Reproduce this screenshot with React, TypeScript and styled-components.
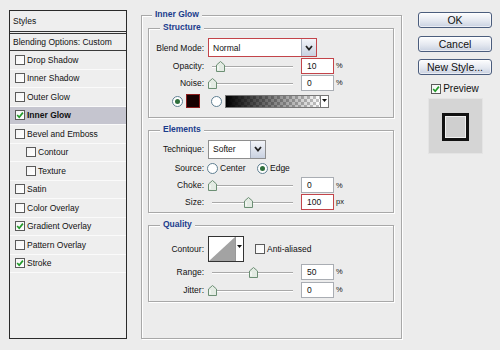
import React from "react";
import styled, { createGlobalStyle } from "styled-components";

const GlobalStyle = createGlobalStyle`
  html, body { margin: 0; padding: 0; background: #ececec; }
  body {
    font-family: "Liberation Sans", Arial, sans-serif;
    font-size: 8.5px;
    color: #111;
  }
`;

const Dialog = styled.div`
  width: 500px;
  height: 350px;
  box-sizing: border-box;
  padding: 10px 0 0 9px;
  display: flex;
  align-items: flex-start;
  background: #ececec;
  overflow: hidden;
`;

/* ---------- left styles list ---------- */

const StylesPanel = styled.div`
  width: 118px;
  height: 329px;
  box-sizing: border-box;
  border: 1px solid #2a2a2a;
  background: #eeeeee;
  display: flex;
  flex-direction: column;
`;

const PanelHeader = styled.div`
  height: 20px;
  display: flex;
  align-items: center;
  padding-left: 3px;
  border-bottom: 3px double #333;
`;

const BlendRow = styled.div`
  height: 17px;
  box-sizing: border-box;
  display: flex;
  align-items: center;
  padding-left: 3px;
  border-bottom: 1px solid #3a3a3a;
`;

const StyleRow = styled.div<{ $selected?: boolean; $indent?: boolean }>`
  height: 18.5px;
  box-sizing: border-box;
  display: flex;
  align-items: center;
  gap: 2px;
  padding-left: ${(p) => (p.$indent ? 16 : 5)}px;
  border-bottom: 1px solid #fafafa;
  background: ${(p) => (p.$selected ? "#c5c5cf" : "transparent")};
  font-weight: ${(p) => (p.$selected ? "bold" : "normal")};
`;

const Box = styled.span`
  width: 10px;
  height: 10px;
  box-sizing: border-box;
  border: 1px solid #5a5a5a;
  background: linear-gradient(135deg, #f4f4f4, #ffffff);
  display: inline-flex;
  align-items: center;
  justify-content: center;
  flex: none;
`;

function CheckBox({ checked }: { checked?: boolean }) {
  return (
    <Box>
      {checked && (
        <svg width="8" height="8" viewBox="0 0 8 8">
          <path d="M1.2 4 L3.2 6.2 L6.9 1.6" fill="none" stroke="#229a2a" strokeWidth="1.7" />
        </svg>
      )}
    </Box>
  );
}

/* ---------- group boxes ---------- */

const OuterGroup = styled.div`
  position: relative;
  margin: 5px 0 0 14px;
  width: 261px;
  height: 324px;
  box-sizing: border-box;
  border: 1px solid #a8a8a8;
  box-shadow: inset 1px 1px 0 #fff, 1px 1px 0 #fff;
  padding: 12px 7px 0 6px;
  flex: none;
`;

const Legend = styled.span<{ $left: number }>`
  position: absolute;
  top: -7px;
  left: ${(p) => p.$left}px;
  padding: 0 3px;
  background: #ececec;
  font-weight: bold;
  color: #1b3c8c;
  line-height: 11px;
`;

const Section = styled.div<{ $h: number; $pt: number }>`
  position: relative;
  height: ${(p) => p.$h}px;
  box-sizing: border-box;
  border: 1px solid #a8a8a8;
  box-shadow: inset 1px 1px 0 #fff, 1px 1px 0 #fff;
  padding-top: ${(p) => p.$pt}px;
  & + & {
    margin-top: 12px;
  }
`;

const FieldRow = styled.div<{ $h: number }>`
  height: ${(p) => p.$h}px;
  display: grid;
  grid-template-columns: 59px 1fr;
  align-items: center;
`;

const Label = styled.span`
  text-align: right;
  padding-right: 4px;
`;

const Control = styled.div`
  display: flex;
  align-items: center;
`;

const Select = styled.div<{ $w: number; $alert?: boolean }>`
  width: ${(p) => p.$w}px;
  height: 19px;
  box-sizing: border-box;
  border: 1px solid ${(p) => (p.$alert ? "#c3444a" : "#8e8e8e")};
  background: #fff;
  display: flex;
  align-items: stretch;
`;

const SelectText = styled.span`
  flex: 1;
  display: flex;
  align-items: center;
  padding-left: 4px;
`;

const SelectButton = styled.span`
  width: 14px;
  border-left: 1px solid #a4acbb;
  background: linear-gradient(#f2f4f9, #c9d1e0);
  display: flex;
  align-items: center;
  justify-content: center;
`;

function Chevron() {
  return (
    <svg width="8" height="6" viewBox="0 0 8 6">
      <path d="M1 1 L4 4.5 L7 1" fill="none" stroke="#222" strokeWidth="1.8" />
    </svg>
  );
}

const Slider = styled.div`
  position: relative;
  width: 89px;
  height: 12px;
  &::before {
    content: "";
    position: absolute;
    left: 4px;
    right: 4px;
    top: 6px;
    height: 1px;
    background: #a9a9a9;
    box-shadow: 0 1px 0 #fff;
  }
`;

const Thumb = styled.svg`
  position: absolute;
  top: 1px;
  margin-left: -4px;
`;

function SliderTrack({ at }: { at: number }) {
  return (
    <Slider>
      <Thumb width="9" height="11" viewBox="0 0 9 11" style={{ left: 4 + at * 81 }}>
        <path d="M0.5 4 L4.5 0.5 L8.5 4 L8.5 10.5 L0.5 10.5 Z" fill="#e3ebe3" stroke="#6c8f74" />
        <path d="M2 5 L2 9" stroke="#fff" />
      </Thumb>
    </Slider>
  );
}

const NumberBox = styled.div<{ $alert?: boolean }>`
  width: 33px;
  height: 16px;
  box-sizing: border-box;
  margin-left: 4px;
  border: 1px solid ${(p) => (p.$alert ? "#c3444a" : "#a9adb3")};
  background: #fff;
  display: flex;
  align-items: center;
  padding-left: 5px;
`;

const Unit = styled.span`
  margin-left: 2px;
  font-size: 7.5px;
`;

function SliderField({
  label,
  value,
  at,
  unit,
  alert,
  h,
}: {
  label: string;
  value: string;
  at: number;
  unit: string;
  alert?: boolean;
  h: number;
}) {
  return (
    <FieldRow $h={h}>
      <Label>{label}</Label>
      <Control>
        <SliderTrack at={at} />
        <NumberBox $alert={alert}>{value}</NumberBox>
        <Unit>{unit}</Unit>
      </Control>
    </FieldRow>
  );
}

const RadioDot = styled.span<{ $checked?: boolean }>`
  width: 11px;
  height: 11px;
  box-sizing: border-box;
  border-radius: 50%;
  border: 1px solid #5f7f92;
  background: #fff;
  display: inline-flex;
  align-items: center;
  justify-content: center;
  flex: none;
  &::after {
    content: "";
    width: 5px;
    height: 5px;
    border-radius: 50%;
    background: ${(p) => (p.$checked ? "#2f6f3c" : "transparent")};
  }
`;

const ColorRow = styled.div`
  height: 20px;
  display: flex;
  align-items: center;
  padding-left: 23px;
`;

const Swatch = styled.span`
  width: 14px;
  height: 14px;
  box-sizing: border-box;
  margin: 0 11px 0 3px;
  border: 1px solid #8b1d1d;
  background: #160000;
`;

const GradientBar = styled.span`
  width: 104px;
  height: 13px;
  box-sizing: border-box;
  margin-left: 3px;
  border: 1px solid #777;
  display: flex;
`;

const GradientFill = styled.span`
  flex: 1;
  background: linear-gradient(to right, #000, rgba(0, 0, 0, 0)),
    repeating-conic-gradient(#c4c4c4 0% 25%, #fff 0% 50%) 0 0 / 6px 6px;
`;

const ArrowCell = styled.span`
  width: 8px;
  border-left: 1px solid #777;
  background: #fff;
  display: flex;
  justify-content: center;
  padding-top: 3px;
  box-sizing: border-box;
`;

function DownArrow() {
  return (
    <svg width="5" height="3" viewBox="0 0 5 3">
      <path d="M0 0 L5 0 L2.5 3 Z" fill="#111" />
    </svg>
  );
}

const RadioOption = styled.span<{ $w: number }>`
  width: ${(p) => p.$w}px;
  display: flex;
  align-items: center;
  gap: 2px;
`;

const ContourBox = styled.div`
  width: 36px;
  height: 26px;
  box-sizing: border-box;
  border: 1px solid #333;
  background: #fff;
  display: flex;
`;

const ContourArrow = styled.span`
  width: 8px;
  border-left: 1px solid #999;
  display: flex;
  justify-content: center;
  padding-top: 8px;
  box-sizing: border-box;
`;

const InlineCheck = styled.span`
  margin-left: 11px;
  display: flex;
  align-items: center;
  gap: 2px;
`;

/* ---------- right column ---------- */

const SideColumn = styled.div`
  margin: 2px 0 0 16px;
  width: 74px;
  display: flex;
  flex-direction: column;
  align-items: center;
  flex: none;
`;

const Button = styled.div`
  width: 74px;
  height: 16px;
  box-sizing: border-box;
  border: 1px solid #4b5d7d;
  border-radius: 3px;
  background: linear-gradient(#fdfdfe, #e4e8f0 55%, #c9d1e1);
  box-shadow: inset 0 0 0 1px rgba(255, 255, 255, 0.6);
  display: flex;
  align-items: center;
  justify-content: center;
  font-size: 10.5px;
  color: #111;
  & + & {
    margin-top: 7.5px;
  }
`;

const PreviewRow = styled.div`
  margin-top: 8px;
  height: 11px;
  display: flex;
  align-items: center;
  gap: 2px;
  font-size: 10px;
`;

const PreviewBox = styled.div`
  margin-top: 4px;
  width: 55px;
  height: 56px;
  box-sizing: border-box;
  border: 1px solid #e4e4e4;
  background: #d5d5d5;
  display: flex;
  align-items: center;
  justify-content: center;
`;

const PreviewSquare = styled.div`
  width: 27px;
  height: 28px;
  box-sizing: border-box;
  border: 3px solid #111;
  background: #cfcfcf;
  box-shadow: inset 0 0 0 1px #efefef;
  margin-top: 2px;
`;

const styleItems: { name: string; checked?: boolean; selected?: boolean; indent?: boolean }[] = [
  { name: "Drop Shadow" },
  { name: "Inner Shadow" },
  { name: "Outer Glow" },
  { name: "Inner Glow", checked: true, selected: true },
  { name: "Bevel and Emboss" },
  { name: "Contour", indent: true },
  { name: "Texture", indent: true },
  { name: "Satin" },
  { name: "Color Overlay" },
  { name: "Gradient Overlay", checked: true },
  { name: "Pattern Overlay" },
  { name: "Stroke", checked: true },
];

export default function App() {
  return (
    <>
      <GlobalStyle />
      <Dialog>
        <StylesPanel>
          <PanelHeader>Styles</PanelHeader>
          <BlendRow>Blending Options: Custom</BlendRow>
          {styleItems.map((s) => (
            <StyleRow key={s.name} $selected={s.selected} $indent={s.indent}>
              <CheckBox checked={s.checked} />
              {s.name}
            </StyleRow>
          ))}
        </StylesPanel>

        <OuterGroup>
          <Legend $left={10}>Inner Glow</Legend>

          <Section $h={90} $pt={9}>
            <Legend $left={11}>Structure</Legend>
            <FieldRow $h={19}>
              <Label>Blend Mode:</Label>
              <Control>
                <Select $w={109} $alert>
                  <SelectText>Normal</SelectText>
                  <SelectButton>
                    <Chevron />
                  </SelectButton>
                </Select>
              </Control>
            </FieldRow>
            <SliderField label="Opacity:" value="10" at={0.1} unit="%" alert h={17} />
            <SliderField label="Noise:" value="0" at={0} unit="%" h={17} />
            <ColorRow>
              <RadioDot $checked />
              <Swatch />
              <RadioDot />
              <GradientBar>
                <GradientFill />
                <ArrowCell>
                  <DownArrow />
                </ArrowCell>
              </GradientBar>
            </ColorRow>
          </Section>

          <Section $h={83} $pt={8}>
            <Legend $left={11}>Elements</Legend>
            <FieldRow $h={20}>
              <Label>Technique:</Label>
              <Control>
                <Select $w={58}>
                  <SelectText>Softer</SelectText>
                  <SelectButton>
                    <Chevron />
                  </SelectButton>
                </Select>
              </Control>
            </FieldRow>
            <FieldRow $h={18}>
              <Label>Source:</Label>
              <Control style={{ marginLeft: -1 }}>
                <RadioOption $w={50}>
                  <RadioDot />
                  Center
                </RadioOption>
                <RadioOption $w={40}>
                  <RadioDot $checked />
                  Edge
                </RadioOption>
              </Control>
            </FieldRow>
            <SliderField label="Choke:" value="0" at={0} unit="%" h={16} />
            <SliderField label="Size:" value="100" at={0.44} unit="px" alert h={17} />
          </Section>

          <Section $h={77} $pt={10}>
            <Legend $left={11}>Quality</Legend>
            <FieldRow $h={26}>
              <Label>Contour:</Label>
              <Control>
                <ContourBox>
                  <svg width="26" height="24" viewBox="0 0 26 24">
                    <path d="M0 24 L26 0 L26 24 Z" fill="#a3a3a3" />
                  </svg>
                  <ContourArrow>
                    <DownArrow />
                  </ContourArrow>
                </ContourBox>
                <InlineCheck>
                  <CheckBox />
                  Anti-aliased
                </InlineCheck>
              </Control>
            </FieldRow>
            <SliderField label="Range:" value="50" at={0.5} unit="%" h={19} />
            <SliderField label="Jitter:" value="0" at={0} unit="%" h={17} />
          </Section>
        </OuterGroup>

        <SideColumn>
          <Button>OK</Button>
          <Button>Cancel</Button>
          <Button>New Style...</Button>
          <PreviewRow>
            <CheckBox checked />
            Preview
          </PreviewRow>
          <PreviewBox>
            <PreviewSquare />
          </PreviewBox>
        </SideColumn>
      </Dialog>
    </>
  );
}
